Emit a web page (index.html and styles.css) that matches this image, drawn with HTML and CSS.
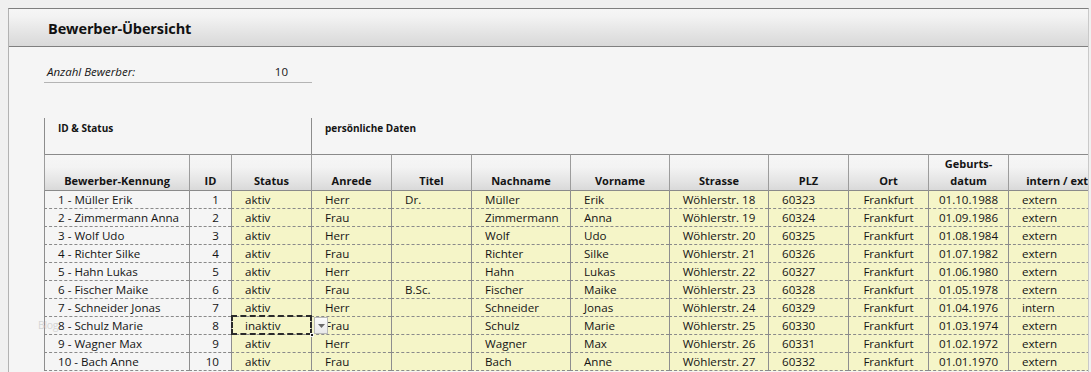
FILE: index.html
```html
<!DOCTYPE html>
<html lang="de">
<head>
<meta charset="utf-8">
<title>Bewerber-Übersicht</title>
<link rel="stylesheet" href="styles.css">
</head>
<body>
<div class="frame">
  <div class="panel">
    <header class="titlebar"><h1 class="title">Bewerber-Übersicht</h1></header>
    <main class="content">
      <div class="count">
        <span class="count-label">Anzahl Bewerber:</span>
        <span class="count-value">10</span>
      </div>
      <div class="sheet">
        <div class="row sections">
          <div class="sec sec-id">ID &amp; Status</div>
          <div class="sec sec-pers">persönliche Daten</div>
        </div>
        <div class="row head">
          <div class="h">Bewerber-Kennung</div>
          <div class="h">ID</div>
          <div class="h">Status</div>
          <div class="h">Anrede</div>
          <div class="h">Titel</div>
          <div class="h">Nachname</div>
          <div class="h">Vorname</div>
          <div class="h">Strasse</div>
          <div class="h">PLZ</div>
          <div class="h">Ort</div>
          <div class="h">Geburts-<br>datum</div>
          <div class="h">intern / extern</div>
        </div>

        <div class="row data">
          <div class="c">1 - Müller Erik</div><div class="c num">1</div><div class="c y">aktiv</div><div class="c y">Herr</div><div class="c y">Dr.</div><div class="c y">Müller</div><div class="c y">Erik</div><div class="c y mid">Wöhlerstr. 18</div><div class="c y">60323</div><div class="c y mid">Frankfurt</div><div class="c y mid">01.10.1988</div><div class="c y">extern</div>
        </div>
        <div class="row data">
          <div class="c">2 - Zimmermann Anna</div><div class="c num">2</div><div class="c y">aktiv</div><div class="c y">Frau</div><div class="c y"></div><div class="c y">Zimmermann</div><div class="c y">Anna</div><div class="c y mid">Wöhlerstr. 19</div><div class="c y">60324</div><div class="c y mid">Frankfurt</div><div class="c y mid">01.09.1986</div><div class="c y">extern</div>
        </div>
        <div class="row data">
          <div class="c">3 - Wolf Udo</div><div class="c num">3</div><div class="c y">aktiv</div><div class="c y">Herr</div><div class="c y"></div><div class="c y">Wolf</div><div class="c y">Udo</div><div class="c y mid">Wöhlerstr. 20</div><div class="c y">60325</div><div class="c y mid">Frankfurt</div><div class="c y mid">01.08.1984</div><div class="c y">extern</div>
        </div>
        <div class="row data">
          <div class="c">4 - Richter Silke</div><div class="c num">4</div><div class="c y">aktiv</div><div class="c y">Frau</div><div class="c y"></div><div class="c y">Richter</div><div class="c y">Silke</div><div class="c y mid">Wöhlerstr. 21</div><div class="c y">60326</div><div class="c y mid">Frankfurt</div><div class="c y mid">01.07.1982</div><div class="c y">extern</div>
        </div>
        <div class="row data">
          <div class="c">5 - Hahn Lukas</div><div class="c num">5</div><div class="c y">aktiv</div><div class="c y">Herr</div><div class="c y"></div><div class="c y">Hahn</div><div class="c y">Lukas</div><div class="c y mid">Wöhlerstr. 22</div><div class="c y">60327</div><div class="c y mid">Frankfurt</div><div class="c y mid">01.06.1980</div><div class="c y">extern</div>
        </div>
        <div class="row data">
          <div class="c">6 - Fischer Maike</div><div class="c num">6</div><div class="c y">aktiv</div><div class="c y">Frau</div><div class="c y">B.Sc.</div><div class="c y">Fischer</div><div class="c y">Maike</div><div class="c y mid">Wöhlerstr. 23</div><div class="c y">60328</div><div class="c y mid">Frankfurt</div><div class="c y mid">01.05.1978</div><div class="c y">extern</div>
        </div>
        <div class="row data">
          <div class="c">7 - Schneider Jonas</div><div class="c num">7</div><div class="c y">aktiv</div><div class="c y">Herr</div><div class="c y"></div><div class="c y">Schneider</div><div class="c y">Jonas</div><div class="c y mid">Wöhlerstr. 24</div><div class="c y">60329</div><div class="c y mid">Frankfurt</div><div class="c y mid">01.04.1976</div><div class="c y">intern</div>
        </div>
        <div class="row data">
          <div class="c"><span class="ghost">Blog</span>8 - Schulz Marie</div><div class="c num">8</div><div class="c y selected">inaktiv<span class="marquee"></span><span class="handle"></span><span class="dropdown"><svg width="7" height="4" viewBox="0 0 7 4"><path d="M0 0h7L3.5 4z" fill="#6b6b6b"/></svg></span></div><div class="c y">Frau</div><div class="c y"></div><div class="c y">Schulz</div><div class="c y">Marie</div><div class="c y mid">Wöhlerstr. 25</div><div class="c y">60330</div><div class="c y mid">Frankfurt</div><div class="c y mid">01.03.1974</div><div class="c y">extern</div>
        </div>
        <div class="row data">
          <div class="c">9 - Wagner Max</div><div class="c num">9</div><div class="c y">aktiv</div><div class="c y">Herr</div><div class="c y"></div><div class="c y">Wagner</div><div class="c y">Max</div><div class="c y mid">Wöhlerstr. 26</div><div class="c y">60331</div><div class="c y mid">Frankfurt</div><div class="c y mid">01.02.1972</div><div class="c y">extern</div>
        </div>
        <div class="row data">
          <div class="c">10 - Bach Anne</div><div class="c num">10</div><div class="c y">aktiv</div><div class="c y">Frau</div><div class="c y"></div><div class="c y">Bach</div><div class="c y">Anne</div><div class="c y mid">Wöhlerstr. 27</div><div class="c y">60332</div><div class="c y mid">Frankfurt</div><div class="c y mid">01.01.1970</div><div class="c y">extern</div>
        </div>
      </div>
    </main>
  </div>
</div>
</body>
</html>
```

FILE: styles.css
```css
* { box-sizing: border-box; }

html, body {
  margin: 0;
  padding: 0;
  background: #f0f0f0;
}

body {
  font-family: "Open Sans", "Liberation Sans", sans-serif;
  color: #141414;
}

.frame {
  width: 1091px;
  height: 372px;
  overflow: hidden;
  padding: 8px 0 0 8px;
}

.panel {
  width: 1081px;
  height: 400px;
  background: #f5f5f5;
  border-top: 1px solid #7f7f7f;
  border-left: 1px solid #b2b2b2;
  border-right: 1px solid #c9c9c9;
  overflow: hidden;
}

.titlebar {
  height: 38px;
  border-bottom: 1px solid #7f7f7f;
  background: linear-gradient(#f6f6f6 0%, #f3f3f3 20%, #e2e2e2 70%, #d9d9d9 100%);
  display: flex;
  align-items: center;
  padding: 1px 0 0 39px;
}

.title {
  margin: 0;
  font-size: 14.5px;
  font-weight: 700;
  color: #111;
  letter-spacing: -0.1px;
}

.content {
  padding: 15px 0 0 35px;
}

.count {
  width: 268px;
  height: 21px;
  border-bottom: 1px solid #b4b4b4;
  display: flex;
  justify-content: space-between;
  align-items: center;
  padding: 0 24px 0 3px;
  font-size: 11.5px;
  line-height: 20px;
}

.count-label { font-style: italic; }

.sheet {
  margin-top: 35px;
  width: 1080px;
}

.row {
  display: grid;
  grid-template-columns: 145px 42px 80px 80px 80px 99px 99px 99px 80px 80px 80px 116px;
}

.sections { height: 36px; }

.sec {
  border-left: 1px solid #8c8c8c;
  padding: 3px 0 0 13px;
  font-size: 10px;
  font-weight: 700;
  line-height: 14px;
}

.sec-id { grid-column: 1 / 4; }
.sec-pers { grid-column: 4 / -1; }

.head { height: 37px; }

.h {
  border-top: 1px solid #8a8a8a;
  border-bottom: 1px solid #8a8a8a;
  border-left: 1px solid #9c9c9c;
  background: linear-gradient(#f6f6f6 0%, #f3f3f3 35%, #e4e4e4 75%, #d9d9d9 100%);
  display: flex;
  align-items: flex-end;
  justify-content: center;
  text-align: center;
  font-size: 11px;
  font-weight: 700;
  line-height: 17px;
  white-space: nowrap;
  padding-bottom: 1px;
}

.data { height: 18px; }

.c {
  height: 18px;
  border-left: 1px solid #8e8e8e;
  border-bottom: 1px dashed #8a8a8a;
  padding: 0 0 0 13px;
  font-size: 11.6px;
  line-height: 17px;
  white-space: nowrap;
  position: relative;
}

.y { background: #f5f5c8; }

.num {
  text-align: right;
  padding: 0 12px 0 0;
}

.mid {
  text-align: center;
  padding: 0;
}

.ghost {
  position: absolute;
  left: -7px;
  top: 0;
  font-size: 10.5px;
  color: #d6d6d6;
  letter-spacing: -0.3px;
}

.selected { z-index: 2; }

.marquee {
  position: absolute;
  left: -1px;
  top: -2px;
  right: -1px;
  bottom: -1px;
  border: 2px dashed #2a2a2a;
  pointer-events: none;
}

.handle {
  position: absolute;
  right: -3px;
  bottom: -3px;
  width: 4px;
  height: 4px;
  background: #222;
  border: 1px solid #f5f5f5;
}

.dropdown {
  position: absolute;
  left: calc(100% + 3px);
  top: 0;
  width: 14px;
  height: 17px;
  border: 1px solid #b9b9b9;
  background: linear-gradient(#fbfbfb, #e9e9e9);
  display: flex;
  align-items: center;
  justify-content: center;
}
```
